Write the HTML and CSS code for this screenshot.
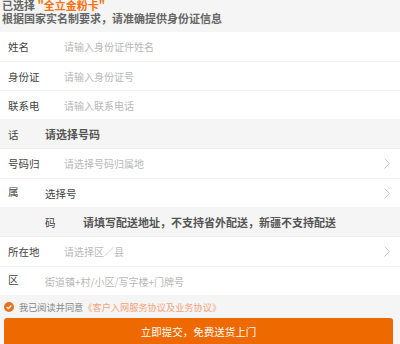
FILE: index.html
```html
<!DOCTYPE html>
<html lang="zh">
<head>
<meta charset="utf-8">
<link rel="stylesheet" href="styles.css">
</head>
<body>
<div class="page">
  <div class="head">
    <div class="h1">已选择 <span class="hl">"全立金粉卡"</span></div>
    <div class="h2">根据国家实名制要求，请准确提供身份证信息</div>
  </div>

  <div class="row tall"><span class="lab">姓名</span><span class="ph">请输入身份证件姓名</span></div>
  <div class="row"><span class="lab">身份证</span><span class="ph">请输入身份证号</span></div>
  <div class="row"><span class="lab">联系电</span><span class="ph">请输入联系电话</span></div>
  <div class="row grey"><span class="lab-s">话</span><span class="sect">请选择号码</span></div>
  <div class="row tall"><span class="lab">号码归</span><span class="ph">请选择号码归属地</span><svg class="chev" width="6" height="11" viewBox="0 0 6 11"><path d="M0.5 0.5 L5.5 5.5 L0.5 10.5" fill="none" stroke="#c8c8c8" stroke-width="1"/></svg></div>
  <div class="row"><span class="lab-s up">属</span><span class="val">选择号</span><svg class="chev" width="6" height="11" viewBox="0 0 6 11"><path d="M0.5 0.5 L5.5 5.5 L0.5 10.5" fill="none" stroke="#c8c8c8" stroke-width="1"/></svg></div>
  <div class="row grey"><span class="lab-s"></span><span class="lab-m">码</span><span class="sect">请填写配送地址，不支持省外配送，新疆不支持配送</span></div>
  <div class="row tall"><span class="lab">所在地</span><span class="ph">请选择区／县</span><svg class="chev" width="6" height="11" viewBox="0 0 6 11"><path d="M0.5 0.5 L5.5 5.5 L0.5 10.5" fill="none" stroke="#c8c8c8" stroke-width="1"/></svg></div>
  <div class="row"><span class="lab-s up">区</span><span class="ph">街道镇+村/小区/写字楼+门牌号</span></div>

  <div class="foot">
    <div class="agree">
      <span class="check"><svg width="10" height="10" viewBox="0 0 10 10"><circle cx="5" cy="5" r="5" fill="#e8731f"/><path d="M2.7 5.1 L4.3 6.6 L7.3 3.5" fill="none" stroke="#fff" stroke-width="1.3"/></svg></span>
      <span class="agree-t">我已阅读并同意</span><span class="agree-l">《客户入网服务协议及业务协议》</span>
    </div>
    <button class="btn">立即提交，免费送货上门</button>
  </div>
</div>
</body>
</html>
```

FILE: styles.css
```css
* { box-sizing: border-box; }
html, body { margin: 0; padding: 0; background: #fff; }
body {
  font-family: "Noto Sans CJK SC", "Noto Sans", sans-serif;
  width: 400px;
  height: 344px;
  overflow: hidden;
}
.page { display: flex; flex-direction: column; }
.head {
  background: #f5f5f5;
  height: 32px;
  padding: 0 2px;
  font-size: 11px;
  font-weight: bold;
  color: #666;
}
.h1 { line-height: 11px; height: 11px; }
.h2 { line-height: 14px; }
.hl { color: #f5720f; }
.row {
  height: 29px;
  display: flex;
  align-items: center;
  padding: 0 8px;
  border-bottom: 1px solid #f3f3f3;
  font-size: 10.5px;
  color: #444;
  position: relative;
}
.row.tall { height: 30px; }
.row.grey { background: #f5f5f5; border-bottom: 1px solid #f0f0f0; }
.lab { width: 56px; flex: none; }
.lab-s { width: 37px; flex: none; }
.lab-m { width: 38px; flex: none; }
.up { position: relative; top: -2px; }
.ph { color: #b8b8b8; font-size: 10px; }
.val { color: #444; font-size: 10.5px; }
.sect { font-weight: bold; color: #555; font-size: 11px; }
.chev { margin-left: auto; margin-right: 2px; }
.foot {
  background: #f5f5f5;
  flex: 1;
  height: 48px;
  padding: 5px 8px 0 4px;
  display: flex;
  flex-direction: column;
}
.agree {
  display: flex;
  align-items: center;
  height: 12px;
  font-size: 9.2px;
  color: #888;
}
.check { width: 15px; display: flex; }
.agree-l { color: #f7a27a; }
.btn {
  margin-top: 5px;
  width: 389px;
  height: 34px;
  border: none;
  border-radius: 3px;
  background: #ee6a00;
  color: #fff;
  font-family: "Noto Sans CJK SC", sans-serif;
  font-size: 10.5px;
  padding: 0 0 8px 0;
  text-align: center;
}
```
